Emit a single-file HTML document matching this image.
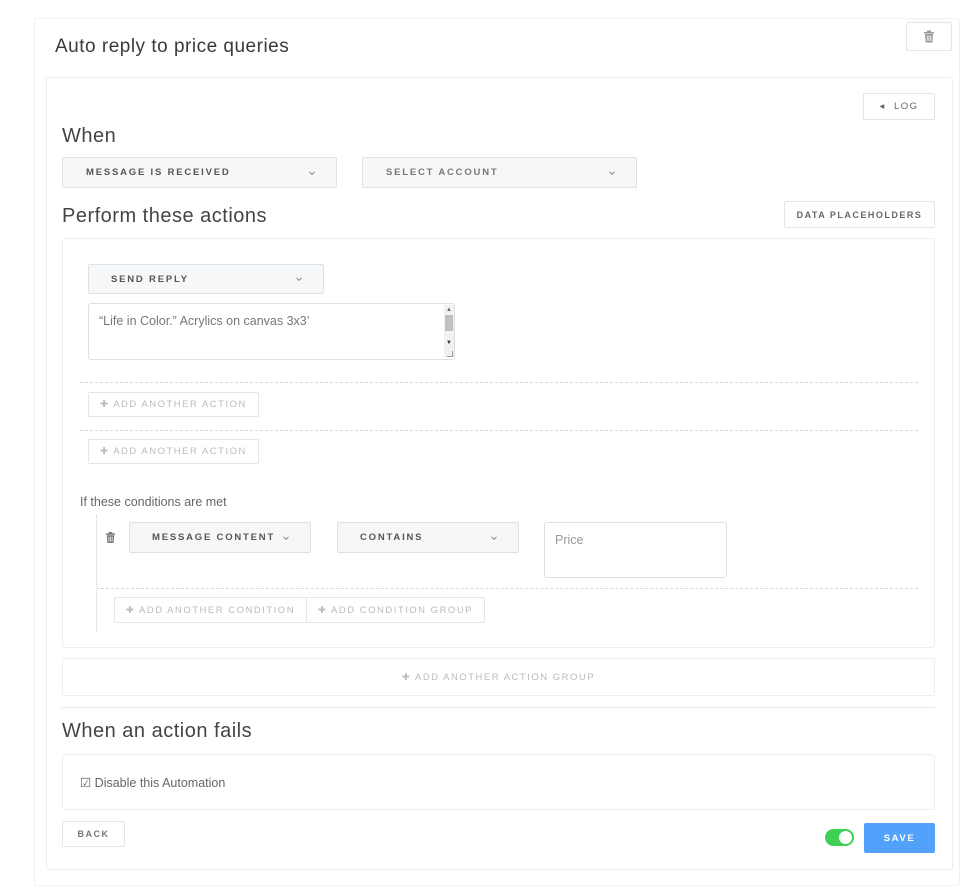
<!DOCTYPE html>
<html><head><style>
*{box-sizing:border-box;margin:0;padding:0}
body{width:960px;height:892px;background:#fff;font-family:"Liberation Sans",sans-serif;position:relative;overflow:hidden;color:#444}
.a{position:absolute}
.h{font-size:20px;color:#444;font-weight:300;letter-spacing:.5px}
.sel{position:absolute;background:#f6f7f8;border:1px solid #dfe2e5;border-radius:2px;font-size:9.5px;font-weight:bold;letter-spacing:1.8px;color:#555;display:flex;align-items:center}
.sel .c{position:absolute;right:22px;top:50%;width:4px;height:4px;border-right:1px solid #888;border-bottom:1px solid #888;transform:translateY(-70%) rotate(45deg)}
.btn{position:absolute;border:1px solid #e3e5e8;border-radius:2px;background:#fff;font-size:9.5px;letter-spacing:1.5px;color:#bbb;display:flex;align-items:center;justify-content:center}
.box{position:absolute;border:1px solid #eceef0;border-radius:3px;background:#fff}
.dash{position:absolute;height:0;border-top:1px dashed #d8d8d8}
</style></head><body>
<div class="box" style="left:34px;top:18px;width:926px;height:868px;border-color:#f2f2f2"></div>
<div class="a" style="left:55px;top:36px;font-size:19px;color:#3a3a3a;letter-spacing:.5px">Auto reply to price queries</div>
<div class="btn" style="left:906px;top:22px;width:46px;height:29px;color:#999">
<svg width="12" height="13" viewBox="0 0 12 13"><rect x="1" y="2" width="10" height="1.5" fill="#999"/><rect x="4" y="0.5" width="4" height="2" fill="#999"/><path d="M2 4h8l-.6 8.5H2.6z" fill="#999"/><path d="M4.2 5.5v5.5M6 5.5v5.5M7.8 5.5v5.5" stroke="#fff" stroke-width=".8"/></svg></div>
<div class="box" style="left:46px;top:77px;width:907px;height:793px"></div>
<div class="btn" style="left:863px;top:93px;width:72px;height:27px;color:#666;font-size:9.5px">◂&nbsp;&nbsp;LOG</div>
<div class="a h" style="left:62px;top:125px">When</div>
<div class="sel" style="left:62px;top:157px;width:275px;height:31px;padding-left:23px">MESSAGE IS RECEIVED<span class="c"></span></div>
<div class="sel" style="left:362px;top:157px;width:275px;height:31px;padding-left:23px;color:#777">SELECT ACCOUNT<span class="c"></span></div>
<div class="a h" style="left:62px;top:205px">Perform these actions</div>
<div class="btn" style="left:784px;top:201px;width:151px;height:27px;color:#666;font-weight:bold;font-size:9px">DATA PLACEHOLDERS</div>
<div class="box" style="left:62px;top:238px;width:873px;height:410px"></div>
<div class="sel" style="left:88px;top:264px;width:236px;height:30px;padding-left:22px">SEND REPLY<span class="c"></span></div>
<div class="box" style="left:88px;top:303px;width:367px;height:57px;border-color:#e0e0e0;font-size:12.5px;color:#777;padding:10px 10px">“Life in Color.” Acrylics on canvas 3x3’</div>
<div class="a" style="left:444px;top:305px;width:10px;height:52px;background:#f1f1f1"></div>
<div class="a" style="left:445px;top:315px;width:8px;height:16px;background:#c1c1c1"></div>
<div class="a" style="left:446px;top:307px;font-size:6px;color:#666">▲</div>
<div class="a" style="left:446px;top:340px;font-size:6px;color:#333">▼</div>
<div class="a" style="left:447px;top:351px;width:6px;height:6px;border-right:1px solid #999;border-bottom:1px solid #999"></div>
<div class="dash" style="left:80px;top:382px;width:838px"></div>
<div class="btn" style="left:88px;top:392px;width:171px;height:25px">✚ ADD ANOTHER ACTION</div>
<div class="dash" style="left:80px;top:430px;width:838px"></div>
<div class="btn" style="left:88px;top:439px;width:171px;height:25px">✚ ADD ANOTHER ACTION</div>
<div class="a" style="left:80px;top:495px;font-size:12.5px;color:#666">If these conditions are met</div>
<div class="a" style="left:96px;top:515px;height:116px;border-left:1px dotted #ccc"></div>
<svg class="a" style="left:105px;top:531px" width="11" height="13" viewBox="0 0 12 13"><rect x="1" y="2" width="10" height="1.5" fill="#777"/><rect x="4" y="0.5" width="4" height="2" fill="#777"/><path d="M2 4h8l-.6 8.5H2.6z" fill="#777"/><path d="M4.2 5.5v5.5M6 5.5v5.5M7.8 5.5v5.5" stroke="#fff" stroke-width=".8"/></svg>
<div class="sel" style="left:129px;top:522px;width:182px;height:31px;padding-left:22px">MESSAGE CONTENT<span class="c"></span></div>
<div class="sel" style="left:337px;top:522px;width:182px;height:31px;padding-left:22px">CONTAINS<span class="c"></span></div>
<div class="box" style="left:544px;top:522px;width:183px;height:56px;border-color:#e0e0e0;font-size:12.5px;color:#999;padding:10px 10px">Price</div>
<div class="dash" style="left:96px;top:588px;width:822px"></div>
<div class="btn" style="left:114px;top:597px;width:193px;height:26px">✚ ADD ANOTHER CONDITION</div>
<div class="btn" style="left:306px;top:597px;width:179px;height:26px">✚ ADD CONDITION GROUP</div>
<div class="btn" style="left:62px;top:658px;width:873px;height:38px;border-color:#eceef0">✚ ADD ANOTHER ACTION GROUP</div>
<div class="a" style="left:62px;top:707px;width:873px;border-top:1px solid #e8e8e8"></div>
<div class="a h" style="left:62px;top:720px">When an action fails</div>
<div class="box" style="left:62px;top:754px;width:873px;height:56px"></div>
<div class="a" style="left:80px;top:775px;font-size:12.5px;color:#666">☑ Disable this Automation</div>
<div class="btn" style="left:62px;top:821px;width:63px;height:26px;color:#777;font-weight:bold;font-size:9px">BACK</div>
<div class="a" style="left:825px;top:829px;width:29px;height:17px;border-radius:9px;background:#3ecf55"></div>
<div class="a" style="left:839px;top:831px;width:13px;height:13px;border-radius:50%;background:#fff"></div>
<div class="a" style="left:864px;top:823px;width:71px;height:30px;background:#52a2fb;border-radius:2px;color:#fff;font-size:9.5px;font-weight:bold;letter-spacing:1.6px;display:flex;align-items:center;justify-content:center">SAVE</div>
</body></html>
